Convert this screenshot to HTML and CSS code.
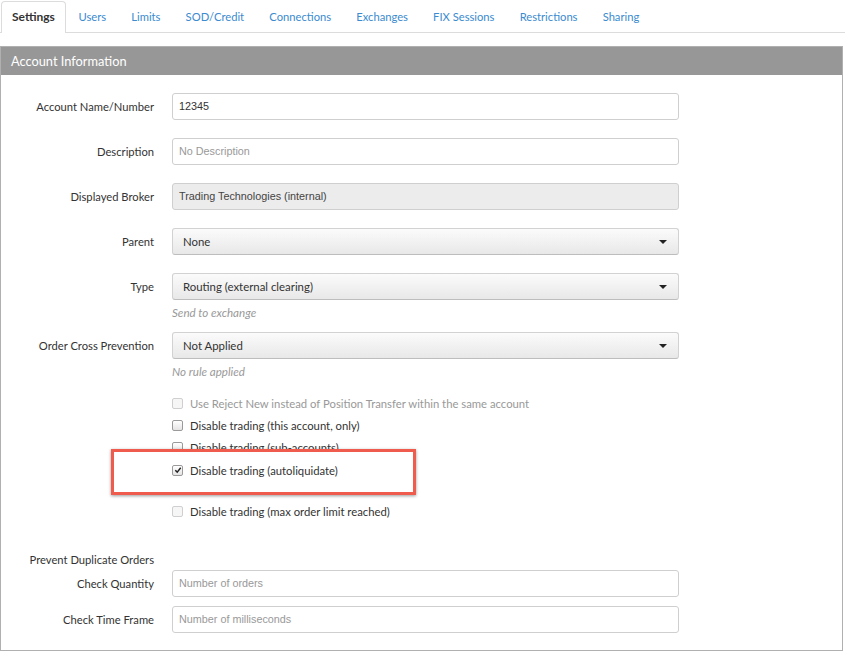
FILE: index.html
```html
<!DOCTYPE html>
<html>
<head>
<meta charset="utf-8">
<link rel="stylesheet" href="styles.css">
</head>
<body>
<nav class="tabs">
  <a class="tab active">Settings</a>
  <a class="tab">Users</a>
  <a class="tab">Limits</a>
  <a class="tab">SOD/Credit</a>
  <a class="tab">Connections</a>
  <a class="tab">Exchanges</a>
  <a class="tab">FIX Sessions</a>
  <a class="tab">Restrictions</a>
  <a class="tab">Sharing</a>
</nav>
<section class="panel">
  <header class="panel-head">Account Information</header>
  <div class="panel-body">
    <div class="row">
      <label class="lbl">Account Name/Number</label>
      <div class="input">12345</div>
    </div>
    <div class="row">
      <label class="lbl">Description</label>
      <div class="input placeholder">No Description</div>
    </div>
    <div class="row">
      <label class="lbl">Displayed Broker</label>
      <div class="input readonly">Trading Technologies (internal)</div>
    </div>
    <div class="row">
      <label class="lbl">Parent</label>
      <div class="select">None<span class="caret"></span></div>
    </div>
    <div class="row row-tight">
      <label class="lbl">Type</label>
      <div class="select">Routing (external clearing)<span class="caret"></span></div>
    </div>
    <div class="row help-row">
      <span></span>
      <div class="help">Send to exchange</div>
    </div>
    <div class="row row-tight">
      <label class="lbl">Order Cross Prevention</label>
      <div class="select">Not Applied<span class="caret"></span></div>
    </div>
    <div class="row help-row">
      <span></span>
      <div class="help">No rule applied</div>
    </div>
    <div class="row checks-row">
      <span></span>
      <div class="checks">
        <div class="check disabled"><span class="box"></span>Use Reject New instead of Position Transfer within the same account</div>
        <div class="check"><span class="box"></span>Disable trading (this account, only)</div>
        <div class="check"><span class="box"></span>Disable trading (sub-accounts)</div>
        <div class="check highlight"><span class="box checked"><svg viewBox="0 0 10 10" width="8" height="8"><path d="M1.6 5.2 L4 7.6 L8.4 2.2" fill="none" stroke="#222" stroke-width="1.8"/></svg></span>Disable trading (autoliquidate)</div>
        <div class="check light-box"><span class="box"></span>Disable trading (max order limit reached)</div>
      </div>
    </div>
    <div class="row group-row">
      <label class="lbl">Prevent Duplicate Orders</label>
    </div>
    <div class="row row-small">
      <label class="lbl">Check Quantity</label>
      <div class="input placeholder">Number of orders</div>
    </div>
    <div class="row row-last">
      <label class="lbl">Check Time Frame</label>
      <div class="input placeholder">Number of milliseconds</div>
    </div>
  </div>
</section>
</body>
</html>
```
FILE: styles.css
```css
* { box-sizing: border-box; }
body {
  margin: 0;
  font-family: Lato, "Open Sans", sans-serif;
  font-size: 11.2px;
  color: #333;
  background: #fff;
}
.tabs {
  display: flex;
  align-items: flex-end;
  height: 33px;
  border-bottom: 1px solid #dcdcdc;
  padding-left: 1px;
}
.tab {
  height: 32px;
  line-height: 30px;
  padding: 0 11.6px;
  border: 1px solid transparent;
  border-bottom: none;
  border-radius: 4px 4px 0 0;
  margin-bottom: -1px;
  color: #3a8bd0;
  font-size: 11.2px;
  cursor: pointer;
}
.tab.active {
  background: #fff;
  border-color: #dcdcdc;
  color: #333;
  font-weight: bold;
  font-size: 12px;
  padding: 0 10px;
}
.panel {
  margin-top: 13px;
  width: 843px;
  border: 1px solid #b0b0b0;
}
.panel-head {
  height: 28px;
  line-height: 28px;
  background: #979797;
  color: #fff;
  font-size: 12.8px;
  padding-left: 10px;
}
.panel-body {
  padding: 18px 0 17px;
}
.row {
  display: grid;
  grid-template-columns: 153px 507px;
  column-gap: 18px;
  align-items: center;
  margin-bottom: 18px;
}
.row-tight { margin-bottom: 0; }
.lbl {
  text-align: right;
  font-size: 11.2px;
  color: #333;
}
.input, .select {
  height: 27px;
  line-height: 25px;
  border: 1px solid #cfcfcf;
  border-radius: 3px;
  padding: 0 6px;
  font-family: "Liberation Sans", Arial, sans-serif;
  font-size: 10.8px;
  color: #333;
  background: #fff;
}
.input.placeholder { color: #999; }
.input.readonly { background: #ececec; color: #444; }
.select {
  position: relative;
  padding: 0 10px;
  font-family: Lato, "Open Sans", sans-serif;
  font-size: 11.4px;
  background: linear-gradient(#fbfbfb, #e8e8e8);
  border-color: #d2d2d2;
  border-bottom-color: #bdbdbd;
}
.caret {
  position: absolute;
  right: 11px;
  top: 11px;
  width: 0;
  height: 0;
  border-left: 4px solid transparent;
  border-right: 4px solid transparent;
  border-top: 4px solid #222;
}
.help-row { margin: 5px 0 11px; }
.help {
  line-height: 16px;
  font-style: italic;
  color: #999;
  font-size: 11.6px;
}
.checks-row { margin: 12px 0 0; }
.checks { display: flex; flex-direction: column; }
.check {
  display: flex;
  align-items: center;
  height: 22px;
  white-space: nowrap;
  font-size: 11.3px;
  color: #333;
}
.check.disabled { color: #999; }
.box {
  width: 11px;
  height: 11px;
  margin-right: 7px;
  border: 1px solid #9a9a9a;
  border-radius: 2px;
  background: linear-gradient(#fff, #e4e4e4);
  display: flex;
  align-items: center;
  justify-content: center;
}
.check.disabled .box, .check.light-box .box { border-color: #cfcfcf; background: #f6f6f6; }
.check.highlight {
  position: relative;
  z-index: 1;
  margin: 1px 0 19px;
}
.check.highlight::before {
  content: "";
  position: absolute;
  z-index: -1;
  left: -61px;
  top: -10px;
  width: 299px;
  height: 40px;
  background: #fff;
  border: 3px solid #ef5b4d;
  box-shadow: 0 1px 3px rgba(0,0,0,0.4);
}
.group-row { margin: 30px 0 2px; line-height: 16px; }
.row-small { margin-bottom: 9px; }
.row-last { margin-bottom: 0; }
```
